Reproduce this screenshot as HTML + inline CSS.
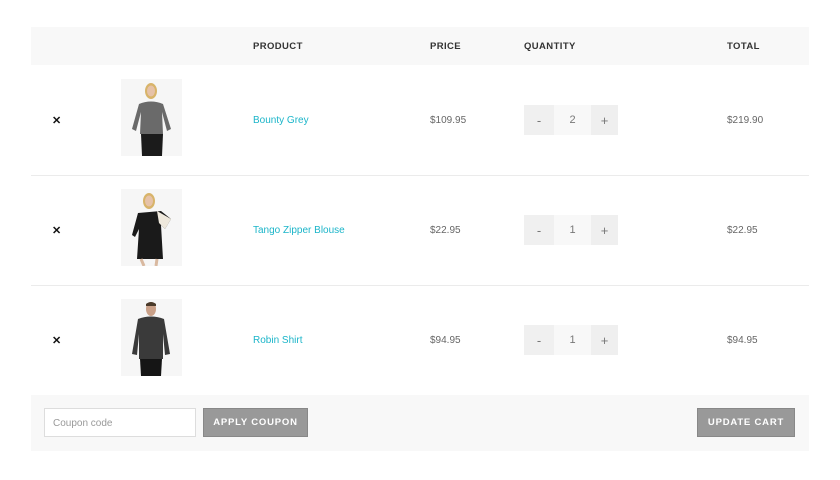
<!DOCTYPE html>
<html><head><style>
*{margin:0;padding:0;box-sizing:border-box}
body{width:840px;height:480px;background:#fff;font-family:"Liberation Sans",sans-serif;position:relative;overflow:hidden;color:#555}
.abs{position:absolute}
.hdr{left:31px;top:27px;width:778px;height:38px;background:#f8f8f8}
.th{font-size:9.5px;font-weight:bold;color:#333;letter-spacing:.4px;top:41px}
.line{left:31px;width:778px;height:1px;background:#ebebeb}
.x{font-size:11px;font-weight:bold;color:#111;left:52px}
.name{font-size:10px;color:#1bb5c9;left:253px}
.txt{font-size:10px;color:#666}
.qty{left:524px;width:94px;height:30px;display:flex}
.qty div{height:30px;display:flex;align-items:center;justify-content:center;font-size:11px;color:#777}
.m{width:30px;background:#f0f0f0;font-size:13px!important}
.v{width:37px;background:#f8f8f8}
.p{width:27px;background:#efefef;font-size:13px!important}
.img{left:121px;width:61px;height:77px}
.foot{left:31px;top:395px;width:778px;height:56px;background:#f8f8f8}
.btn{background:#999;border:1px solid #888;color:#fff;font-size:9.5px;font-weight:bold;letter-spacing:.8px;display:flex;align-items:center;justify-content:center;height:29px;top:408px}
</style></head><body>
<div class="abs hdr"></div>
<div class="abs th" style="left:253px">PRODUCT</div>
<div class="abs th" style="left:430px">PRICE</div>
<div class="abs th" style="left:524px">QUANTITY</div>
<div class="abs th" style="left:727px">TOTAL</div>

<div class="abs line" style="top:175px"></div>
<div class="abs line" style="top:285px"></div>

<div class="abs x" style="top:114px">✕</div>
<svg class="abs img" style="top:79px" viewBox="0 0 61 77"><rect width="61" height="77" fill="#f6f6f6"/><ellipse cx="30" cy="12" rx="6" ry="8" fill="#d8b46a"/><ellipse cx="30" cy="12" rx="4" ry="5.5" fill="#e6c2a8"/><path d="M18 25 Q30 20 42 25 L50 50 L46 52 L41 33 L42 55 L19 55 L20 33 L15 52 L11 50 Z" fill="#6a6a6a"/><path d="M20 55 L42 55 L41 77 L21 77 Z" fill="#1b1b1b"/></svg>
<div class="abs name" style="top:115px">Bounty Grey</div>
<div class="abs txt" style="left:430px;top:115px">$109.95</div>
<div class="abs qty" style="top:105px"><div class="m">-</div><div class="v">2</div><div class="p">+</div></div>
<div class="abs txt" style="left:727px;top:115px">$219.90</div>

<div class="abs x" style="top:224px">✕</div>
<svg class="abs img" style="top:189px" viewBox="0 0 61 77"><rect width="61" height="77" fill="#f6f6f6"/><ellipse cx="28" cy="12" rx="6" ry="8" fill="#d8b46a"/><ellipse cx="28" cy="12" rx="4" ry="5.5" fill="#e6c2a8"/><path d="M17 24 L40 22 L50 30 L44 40 L40 36 L42 70 L16 70 L18 40 L14 48 L11 46 Z" fill="#1a1a1a"/><path d="M36 22 L50 30 L44 40 L38 34 Z" fill="#eee8dc"/><path d="M20 70 L23 77 M36 70 L35 77" stroke="#d9b9a0" stroke-width="3"/></svg>
<div class="abs name" style="top:225px">Tango Zipper Blouse</div>
<div class="abs txt" style="left:430px;top:225px">$22.95</div>
<div class="abs qty" style="top:215px"><div class="m">-</div><div class="v">1</div><div class="p">+</div></div>
<div class="abs txt" style="left:727px;top:225px">$22.95</div>

<div class="abs x" style="top:334px">✕</div>
<svg class="abs img" style="top:299px" viewBox="0 0 61 77"><rect width="61" height="77" fill="#f6f6f6"/><ellipse cx="30" cy="10" rx="5" ry="7" fill="#c9a088"/><path d="M25 5 Q30 1 35 5 L35 7 L25 7 Z" fill="#4a3a2a"/><path d="M17 20 Q30 15 43 20 L49 55 L44 56 L42 35 L42 60 L18 60 L18 35 L16 56 L11 55 Z" fill="#3a3a3a"/><path d="M19 60 L41 60 L40 77 L20 77 Z" fill="#151515"/></svg>
<div class="abs name" style="top:335px">Robin Shirt</div>
<div class="abs txt" style="left:430px;top:335px">$94.95</div>
<div class="abs qty" style="top:325px"><div class="m">-</div><div class="v">1</div><div class="p">+</div></div>
<div class="abs txt" style="left:727px;top:335px">$94.95</div>

<div class="abs foot"></div>
<div class="abs" style="left:44px;top:408px;width:152px;height:29px;background:#fff;border:1px solid #ddd;font-size:10px;color:#999;padding:9px 8px">Coupon code</div>
<div class="abs btn" style="left:203px;width:105px">APPLY COUPON</div>
<div class="abs btn" style="left:697px;width:98px">UPDATE CART</div>
</body></html>
